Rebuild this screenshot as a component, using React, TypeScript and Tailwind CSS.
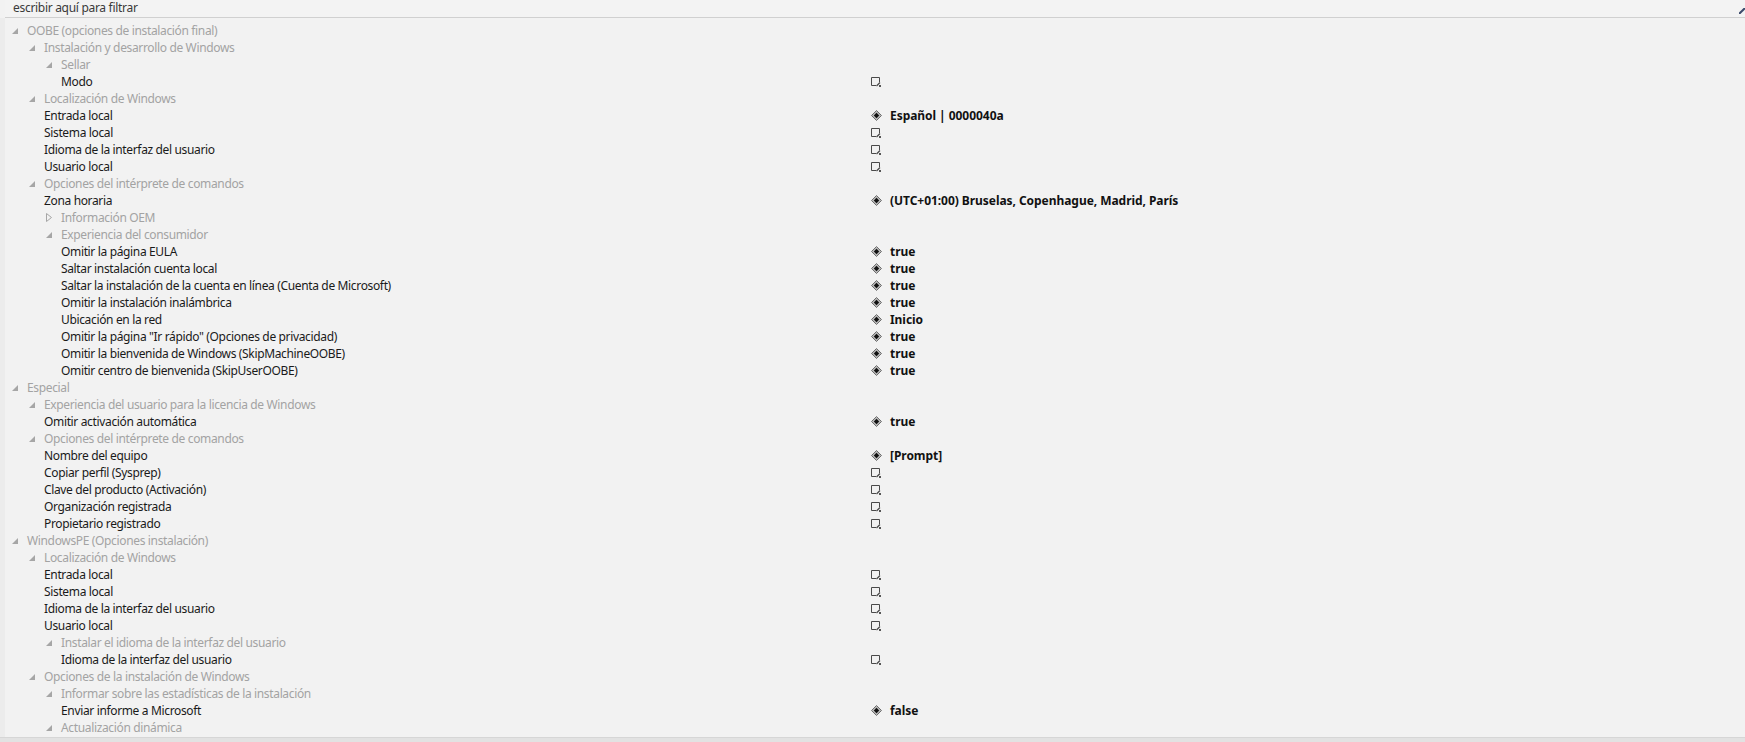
import React from "react";

type Row = {
  label: string;
  level: number;
  kind: "group" | "collapsed" | "leaf";
  value?: string;
  edit?: boolean;
};

const rows: Row[] = [
  { label: "OOBE (opciones de instalación final)", level: 0, kind: "group" },
  { label: "Instalación y desarrollo de Windows", level: 1, kind: "group" },
  { label: "Sellar", level: 2, kind: "group" },
  { label: "Modo", level: 2, kind: "leaf", edit: true },
  { label: "Localización de Windows", level: 1, kind: "group" },
  { label: "Entrada local", level: 1, kind: "leaf", value: "Español | 0000040a" },
  { label: "Sistema local", level: 1, kind: "leaf", edit: true },
  { label: "Idioma de la interfaz del usuario", level: 1, kind: "leaf", edit: true },
  { label: "Usuario local", level: 1, kind: "leaf", edit: true },
  { label: "Opciones del intérprete de comandos", level: 1, kind: "group" },
  { label: "Zona horaria", level: 1, kind: "leaf", value: "(UTC+01:00) Bruselas, Copenhague, Madrid, París" },
  { label: "Información OEM", level: 2, kind: "collapsed" },
  { label: "Experiencia del consumidor", level: 2, kind: "group" },
  { label: "Omitir la página EULA", level: 2, kind: "leaf", value: "true" },
  { label: "Saltar instalación cuenta local", level: 2, kind: "leaf", value: "true" },
  { label: "Saltar la instalación de la cuenta en línea (Cuenta de Microsoft)", level: 2, kind: "leaf", value: "true" },
  { label: "Omitir la instalación inalámbrica", level: 2, kind: "leaf", value: "true" },
  { label: "Ubicación en la red", level: 2, kind: "leaf", value: "Inicio" },
  { label: "Omitir la página \"Ir rápido\" (Opciones de privacidad)", level: 2, kind: "leaf", value: "true" },
  { label: "Omitir la bienvenida de Windows (SkipMachineOOBE)", level: 2, kind: "leaf", value: "true" },
  { label: "Omitir centro de bienvenida (SkipUserOOBE)", level: 2, kind: "leaf", value: "true" },
  { label: "Especial", level: 0, kind: "group" },
  { label: "Experiencia del usuario para la licencia de Windows", level: 1, kind: "group" },
  { label: "Omitir activación automática", level: 1, kind: "leaf", value: "true" },
  { label: "Opciones del intérprete de comandos", level: 1, kind: "group" },
  { label: "Nombre del equipo", level: 1, kind: "leaf", value: "[Prompt]" },
  { label: "Copiar perfil (Sysprep)", level: 1, kind: "leaf", edit: true },
  { label: "Clave del producto (Activación)", level: 1, kind: "leaf", edit: true },
  { label: "Organización registrada", level: 1, kind: "leaf", edit: true },
  { label: "Propietario registrado", level: 1, kind: "leaf", edit: true },
  { label: "WindowsPE (Opciones instalación)", level: 0, kind: "group" },
  { label: "Localización de Windows", level: 1, kind: "group" },
  { label: "Entrada local", level: 1, kind: "leaf", edit: true },
  { label: "Sistema local", level: 1, kind: "leaf", edit: true },
  { label: "Idioma de la interfaz del usuario", level: 1, kind: "leaf", edit: true },
  { label: "Usuario local", level: 1, kind: "leaf", edit: true },
  { label: "Instalar el idioma de la interfaz del usuario", level: 2, kind: "group" },
  { label: "Idioma de la interfaz del usuario", level: 2, kind: "leaf", edit: true },
  { label: "Opciones de la instalación de Windows", level: 1, kind: "group" },
  { label: "Informar sobre las estadísticas de la instalación", level: 2, kind: "group" },
  { label: "Enviar informe a Microsoft", level: 2, kind: "leaf", value: "false" },
  { label: "Actualización dinámica", level: 2, kind: "group" },
];

const indentClass = ["w-[27px]", "w-[44px]", "w-[61px]"];
const labelClass = ["w-[844px]", "w-[827px]", "w-[810px]"];

function ExpandedArrow() {
  return (
    <svg width="6" height="6" viewBox="0 0 6 6" className="block">
      <polygon points="6,0 6,6 0,6" fill="#a6a6a6" />
    </svg>
  );
}

function CollapsedArrow() {
  return (
    <svg width="6" height="9" viewBox="0 0 6 9" className="block">
      <polygon points="0.5,0.5 5.5,4.5 0.5,8.5" fill="none" stroke="#a6a6a6" strokeWidth="1" />
    </svg>
  );
}

function EditIcon() {
  return (
    <svg width="10" height="10" viewBox="0 0 10 10" className="block">
      <path d="M0.5,0.5 H8.5 V5 M0.5,0.5 V8.5 H5" fill="none" stroke="#4a4a4a" strokeWidth="1" />
      <path d="M5.5,9 L9,5.5" stroke="#4a4a4a" strokeWidth="1.3" />
      <rect x="8" y="8" width="2" height="2" fill="#555" />
    </svg>
  );
}

function DiamondIcon() {
  return (
    <svg width="11" height="11" viewBox="0 0 11 11" className="block">
      <polygon points="5.5,0.5 10.5,5.5 5.5,10.5 0.5,5.5" fill="#b8b8b8" stroke="#6e6e6e" strokeWidth="1" />
      <polygon points="5.5,2.8 8.2,5.5 5.5,8.2 2.8,5.5" fill="#111" />
    </svg>
  );
}

function TreeRow({ row }: { row: Row }) {
  const isGroup = row.kind !== "leaf";
  return (
    <div className="flex h-[17px] items-center">
      <div className={`${indentClass[row.level]} shrink-0 flex items-center justify-end pr-[9px]`}>
        {row.kind === "group" && <ExpandedArrow />}
        {row.kind === "collapsed" && <CollapsedArrow />}
      </div>
      <div
        className={`${labelClass[row.level]} shrink-0 whitespace-nowrap tracking-[-0.35px] ${
          isGroup ? "text-[#a3a3a3]" : "text-[#1a1a1a]"
        }`}
      >
        {row.label}
      </div>
      {row.edit && (
        <div className="flex items-center">
          <EditIcon />
        </div>
      )}
      {row.value && (
        <div className="flex items-center gap-[8px]">
          <DiamondIcon />
          <span className="font-bold text-[#111] whitespace-nowrap tracking-[-0.05px]">{row.value}</span>
        </div>
      )}
    </div>
  );
}

export default function App() {
  return (
    <div
      className="w-[1745px] h-[742px] bg-[#f2f2f2] overflow-hidden flex flex-col text-[12px] leading-[17px]"
      style={{ fontFamily: "'Noto Sans', 'Open Sans', sans-serif" }}
    >
      <div className="h-[18px] shrink-0 flex pl-[5px]">
        <div className="flex-1 flex items-start border-b border-[#d0d0d0] bg-[#f3f3f3] pl-[8px] relative">
          <span className="text-[#3a3a3a] leading-[15px] tracking-[-0.3px]">escribir aquí para filtrar</span>
          <svg width="6" height="6" viewBox="0 0 6 6" className="absolute right-0 top-[8px]">
            <path d="M0,6 L6,0" stroke="#3b4a6b" strokeWidth="2" />
          </svg>
        </div>
      </div>
      <div className="flex-1 flex">
        <div className="w-[5px] shrink-0 bg-[#ececec]" />
        <div className="flex-1 flex flex-col pt-[4px] -ml-[5px]">
          {rows.map((r, i) => (
            <TreeRow key={i} row={r} />
          ))}
        </div>
      </div>
      <div className="h-[5px] shrink-0 bg-[#e2e2e2] border-t border-[#d6d6d6]" />
    </div>
  );
}
